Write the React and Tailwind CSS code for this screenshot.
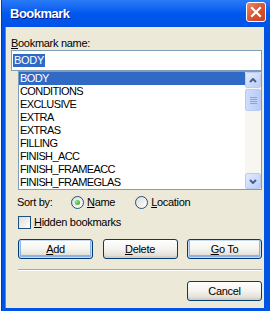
import React from 'react';

const bookmarks = [
  'BODY',
  'CONDITIONS',
  'EXCLUSIVE',
  'EXTRA',
  'EXTRAS',
  'FILLING',
  'FINISH_ACC',
  'FINISH_FRAMEACC',
  'FINISH_FRAMEGLAS',
];

function XpButton({ children, focused, className = '' }) {
  return (
    <button
      className={`h-[20px] w-[75px] rounded-[3px] border border-[#003c74] bg-gradient-to-b from-[#ffffff] via-[#f4f3ee] to-[#dcd8cc] text-[11px] leading-[18px] text-black ${
        focused ? 'shadow-[inset_0_0_0_1px_#c7dbf7,inset_0_-1px_0_2px_#8fb0ef]' : 'shadow-[inset_0_-2px_0_#d6d0c5]'
      } ${className}`}
    >
      {children}
    </button>
  );
}

function ScrollArrow({ up }) {
  return (
    <div className="h-[16px] w-[16px] rounded-[2px] border border-[#bccbf2] bg-gradient-to-br from-[#e3ebfe] to-[#bacdfa] flex items-center justify-center">
      <svg width="8" height="5" viewBox="0 0 8 5">
        <path
          d={up ? 'M1 4 L4 1 L7 4' : 'M1 1 L4 4 L7 1'}
          fill="none"
          stroke="#4d6185"
          strokeWidth="2"
        />
      </svg>
    </div>
  );
}

function Radio({ checked }) {
  return (
    <div className="h-[13px] w-[13px] rounded-full border border-[#1c5180] bg-gradient-to-br from-[#dcdcd7] to-[#ffffff] flex items-center justify-center">
      {checked && <div className="h-[5px] w-[5px] rounded-full bg-[radial-gradient(circle_at_35%_35%,#8fe38f,#21a121)]" />}
    </div>
  );
}

export default function App() {
  return (
    <div className="w-[270px] h-[311px] bg-white font-['Liberation_Sans',Arial,sans-serif] text-[11px] tracking-[-0.3px] text-black">
      <div className="ml-[1px] h-full bg-[#0054e3] flex flex-col border-l border-[#0831d9]">
        {/* title bar */}
        <div className="h-[27px] shrink-0 bg-gradient-to-b from-[#2a7af6] via-[#0058ee] to-[#0052e6] flex items-center pl-[8px] pr-[4px]">
          <span className="text-[13px] font-bold tracking-[-0.5px] text-white [text-shadow:1px_1px_0_#0a1883]">
            Bookmark
          </span>
          <div className="ml-auto mb-[3px] h-[20px] w-[20px] rounded-[3px] border border-white bg-gradient-to-br from-[#e98b6c] via-[#d9552f] to-[#c1441f] flex items-center justify-center">
            <svg width="12" height="12" viewBox="0 0 12 12">
              <path d="M2 2 L10 10 M10 2 L2 10" stroke="white" strokeWidth="2.2" strokeLinecap="square" />
            </svg>
          </div>
        </div>

        {/* body */}
        <div className="flex-1 flex pl-[3px] pr-[6px] pb-[3px]">
          <div className="flex-1 bg-[#ece9d8] flex flex-col border-l border-[#3f8cf3]">
            <div className="mt-[10px] ml-[5px] leading-[13px]">
              <span className="underline underline-offset-1">B</span>ookmark name:
            </div>

            <div className="ml-[5px] w-[251px] h-[21px] border border-[#7f9db9] bg-white flex items-center pl-[1px]">
              <span className="bg-[#316ac5] text-white leading-[13px] px-[1px]">BODY</span>
            </div>

            <div className="ml-[12px] w-[244px] h-[119px] border border-[#7f9db9] bg-white flex">
              <div className="w-[226px] flex flex-col">
                {bookmarks.map((name, i) => (
                  <div
                    key={name}
                    className={`h-[13px] leading-[13px] pl-[1px] tracking-[-0.6px] ${
                      i === 0 ? 'bg-[#316ac5] text-white' : ''
                    }`}
                  >
                    {name}
                  </div>
                ))}
              </div>
              <div className="w-[16px] bg-[#f7f6f1] flex flex-col">
                <ScrollArrow up />
                <div className="mt-[1px] h-[22px] w-[16px] rounded-[2px] border border-[#bccbf2] bg-gradient-to-r from-[#cfdcfc] to-[#b8cbf9] flex flex-col items-center justify-center gap-[1px]">
                  <div className="h-[1px] w-[7px] bg-[#8aa4e8]" />
                  <div className="h-[1px] w-[7px] bg-[#8aa4e8]" />
                  <div className="h-[1px] w-[7px] bg-[#8aa4e8]" />
                  <div className="h-[1px] w-[7px] bg-[#8aa4e8]" />
                </div>
                <div className="flex-1" />
                <ScrollArrow />
              </div>
            </div>

            <div className="mt-[6px] ml-[11px] h-[13px] flex items-center leading-[13px]">
              <span className="w-[54px]">Sort by:</span>
              <Radio checked />
              <span className="ml-[3px]">
                <span className="underline underline-offset-1">N</span>ame
              </span>
              <span className="ml-[20px]">
                <Radio />
              </span>
              <span className="ml-[3px]">
                <span className="underline underline-offset-1">L</span>ocation
              </span>
            </div>

            <div className="mt-[7px] ml-[12px] h-[13px] flex items-center leading-[13px]">
              <div className="h-[13px] w-[13px] border border-[#1c5180] bg-gradient-to-br from-[#dcdcd7] to-[#ffffff]" />
              <span className="ml-[3px]">
                <span className="underline underline-offset-1">H</span>idden bookmarks
              </span>
            </div>

            <div className="mt-[10px] ml-[12px] w-[244px] flex justify-between">
              <XpButton focused>
                <span className="underline underline-offset-1">A</span>dd
              </XpButton>
              <XpButton>
                <span className="underline underline-offset-1">D</span>elete
              </XpButton>
              <XpButton focused>
                <span className="underline underline-offset-1">G</span>o To
              </XpButton>
            </div>

            <div className="mt-[10px] ml-[12px] w-[244px] h-[2px] border-t border-[#aca899] border-b border-b-white" />

            <div className="mt-[10px] ml-[12px] w-[244px] flex justify-end">
              <XpButton className="w-[74px]">Cancel</XpButton>
            </div>
          </div>
        </div>
      </div>
    </div>
  );
}
